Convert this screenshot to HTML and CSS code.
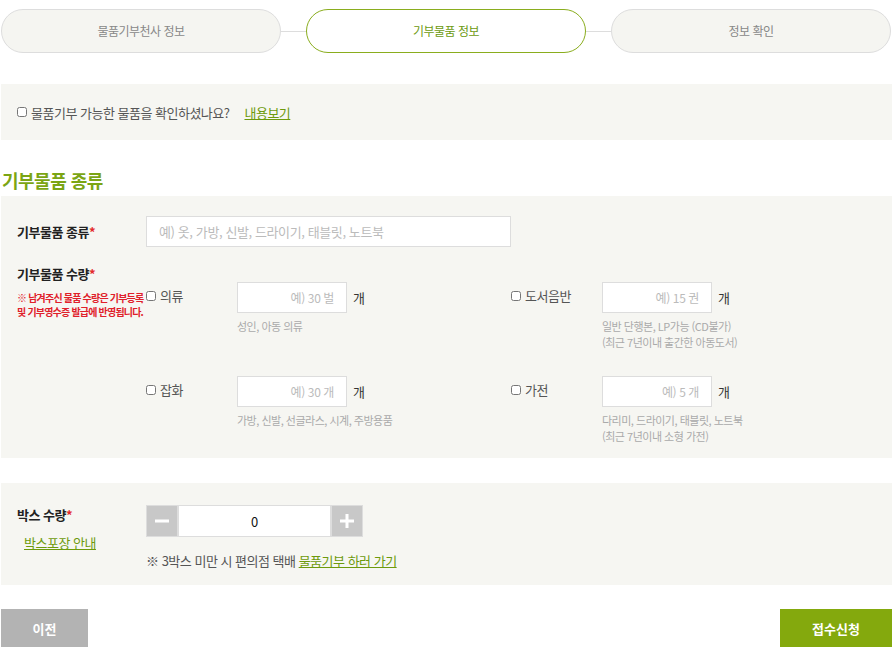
FILE: index.html
```html
<!DOCTYPE html>
<html lang="ko">
<head>
    <meta charset="UTF-8">
    <meta name="viewport" content="width=device-width, initial-scale=1.0">
    <title>물품기부 신청</title>
    <link rel="stylesheet" href="styles.css">
</head>
<body>
<div class="wrap">

    <ol class="steps">
        <li class="step">물품기부천사 정보</li>
        <li class="step__line"></li>
        <li class="step step--on">기부물품 정보</li>
        <li class="step__line"></li>
        <li class="step">정보 확인</li>
    </ol>

    <div class="box box--notice">
        <label class="check"><input type="checkbox"> 물품기부 가능한 물품을 확인하셨나요?</label>
        <a href="#" class="link notice__link">내용보기</a>
    </div>

    <h2 class="title">기부물품 종류</h2>

    <div class="box box--goods">
        <div class="row row--kind">
            <div class="row__label">기부물품 종류<span class="req">*</span></div>
            <input type="text" class="field field--wide" placeholder="예) 옷, 가방, 신발, 드라이기, 태블릿, 노트북">
        </div>

        <div class="row row--count">
            <div class="row__label">
                기부물품 수량<span class="req">*</span>
                <p class="note">※ 남겨주신 물품 수량은 기부등록<br>및 기부영수증 발급에 반영됩니다.</p>
            </div>
            <div class="items">
                <div class="item">
                    <label class="check"><input type="checkbox"> 의류</label>
                    <div class="item__field">
                        <div class="item__input"><input type="text" class="field field--num" placeholder="예) 30 벌"><span class="unit">개</span></div>
                        <p class="hint">성인, 아동 의류</p>
                    </div>
                </div>
                <div class="item">
                    <label class="check"><input type="checkbox"> 도서음반</label>
                    <div class="item__field">
                        <div class="item__input"><input type="text" class="field field--num" placeholder="예) 15 권"><span class="unit">개</span></div>
                        <p class="hint">일반 단행본, LP가능 (CD불가)<br>(최근 7년이내 출간한 아동도서)</p>
                    </div>
                </div>
                <div class="item">
                    <label class="check"><input type="checkbox"> 잡화</label>
                    <div class="item__field">
                        <div class="item__input"><input type="text" class="field field--num" placeholder="예) 30 개"><span class="unit">개</span></div>
                        <p class="hint">가방, 신발, 선글라스, 시계, 주방용품</p>
                    </div>
                </div>
                <div class="item">
                    <label class="check"><input type="checkbox"> 가전</label>
                    <div class="item__field">
                        <div class="item__input"><input type="text" class="field field--num" placeholder="예) 5 개"><span class="unit">개</span></div>
                        <p class="hint">다리미, 드라이기, 태블릿, 노트북<br>(최근 7년이내 소형 가전)</p>
                    </div>
                </div>
            </div>
        </div>
    </div>

    <div class="box box--boxes">
        <div class="row">
            <div class="row__label">
                박스 수량<span class="req">*</span>
                <a href="#" class="link box__guide">박스포장 안내</a>
            </div>
            <div>
                <div class="stepper">
                    <button type="button" class="stepper__btn" aria-label="빼기">
                        <svg width="14" height="14" viewBox="0 0 14 14"><rect x="0" y="5.5" width="14" height="3" fill="#fff"/></svg>
                    </button>
                    <input type="text" class="stepper__input" value="0">
                    <button type="button" class="stepper__btn" aria-label="더하기">
                        <svg width="14" height="14" viewBox="0 0 14 14"><rect x="0" y="5.5" width="14" height="3" fill="#fff"/><rect x="5.5" y="0" width="3" height="14" fill="#fff"/></svg>
                    </button>
                </div>
                <p class="box__note">※ 3박스 미만 시 편의점 택배 <a href="#" class="link">물품기부 하러 가기</a></p>
            </div>
        </div>
    </div>

    <div class="actions">
        <button type="button" class="btn btn--prev">이전</button>
        <button type="button" class="btn btn--submit">접수신청</button>
    </div>

</div>
</body>
</html>
```

FILE: styles.css
```css
* {
    box-sizing: border-box;
}

body {
    margin: 0;
    background: #fff;
    font-family: "Noto Sans CJK KR", "Noto Sans", sans-serif;
    font-size: 13px;
    letter-spacing: -0.5px;
    color: #555;
}

.wrap {
    width: 891px;
    margin-left: 1px;
}

/* steps */
.steps {
    display: flex;
    align-items: center;
    list-style: none;
    margin: 9px 0 0;
    padding: 0;
}

.step {
    width: 280px;
    height: 44px;
    line-height: 42px;
    border: 1px solid #ddd;
    border-radius: 22px;
    background: #f5f5f1;
    text-align: center;
    font-size: 12px;
    color: #888;
}

.step--on {
    background: #fff;
    border-color: #8aad1e;
    color: #6c9a0f;
}

.step__line {
    width: 25px;
    height: 1px;
    background: #ddd;
}

/* boxes */
.box {
    background: #f6f6f2;
}

.box--notice {
    display: flex;
    align-items: center;
    height: 56px;
    margin-top: 31px;
    padding-left: 16px;
}

.check {
    display: inline-flex;
    align-items: center;
    color: #555;
}

.check input {
    width: 10px;
    height: 10px;
    margin: 0 4px 0 0;
}

.link {
    color: #6d9a0c;
    text-decoration: underline;
}

.notice__link {
    margin-left: 15px;
}

.title {
    margin: 28px 0 0 1px;
    font-size: 18px;
    font-weight: bold;
    line-height: 24px;
    color: #7ba514;
}

.box--goods {
    margin-top: 4px;
    padding: 20px 0 14px 16px;
}

.row {
    display: flex;
}

.row--kind {
    align-items: center;
}

.row__label {
    width: 129px;
    flex-shrink: 0;
    font-weight: bold;
    color: #222;
}

.req {
    color: #e32b2b;
}

.field {
    height: 31px;
    border: 1px solid #ddd;
    background: #fff;
    font-family: inherit;
    font-size: 13px;
    letter-spacing: -0.4px;
    padding: 0 12px;
    outline: none;
}

.field::placeholder {
    color: #bbb;
}

.field--wide {
    width: 365px;
}

.row--count {
    margin-top: 17px;
}

.note {
    margin: 8px 0 0;
    font-size: 10px;
    line-height: 14px;
    color: #e0202a;
    letter-spacing: -0.8px;
    white-space: nowrap;
}

.items {
    display: grid;
    grid-template-columns: 365px 365px;
    row-gap: 26px;
    margin-top: 18px;
}

.item {
    display: flex;
}

.item .check {
    width: 91px;
    align-self: flex-start;
    margin-top: 4px;
}

.item__input {
    display: flex;
    align-items: center;
}

.field--num {
    width: 110px;
    text-align: right;
    font-size: 12px;
}

.unit {
    margin-left: 6px;
    color: #333;
}

.hint {
    margin: 5px 0 0;
    font-size: 11px;
    line-height: 16px;
    color: #aaa;
}

/* box count */
.box--boxes {
    margin-top: 25px;
    padding: 22px 0 15px 16px;
}

.box__guide {
    display: block;
    margin: 9px 0 0 7px;
    font-weight: normal;
}

.stepper {
    display: flex;
    width: 217px;
    height: 32px;
    border: 1px solid #ddd;
    background: #ddd;
    gap: 1px;
}

.stepper__btn {
    width: 30px;
    border: 0;
    padding: 0;
    background: #c8c8c8;
    display: flex;
    align-items: center;
    justify-content: center;
}

.stepper__input {
    flex: 1;
    border: 0;
    margin: 0 1px;
    text-align: center;
    font-family: inherit;
    font-size: 13px;
    color: #111;
    outline: none;
}

.box__note {
    margin: 14px 0 0;
    color: #555;
}

/* buttons */
.actions {
    display: flex;
    justify-content: space-between;
    margin-top: 24px;
}

.btn {
    height: 38px;
    border: 0;
    color: #fff;
    font-family: inherit;
    font-size: 13px;
    font-weight: bold;
}

.btn--prev {
    width: 87px;
    background: #b3b3b3;
}

.btn--submit {
    width: 112px;
    background: #84a90d;
}
```
